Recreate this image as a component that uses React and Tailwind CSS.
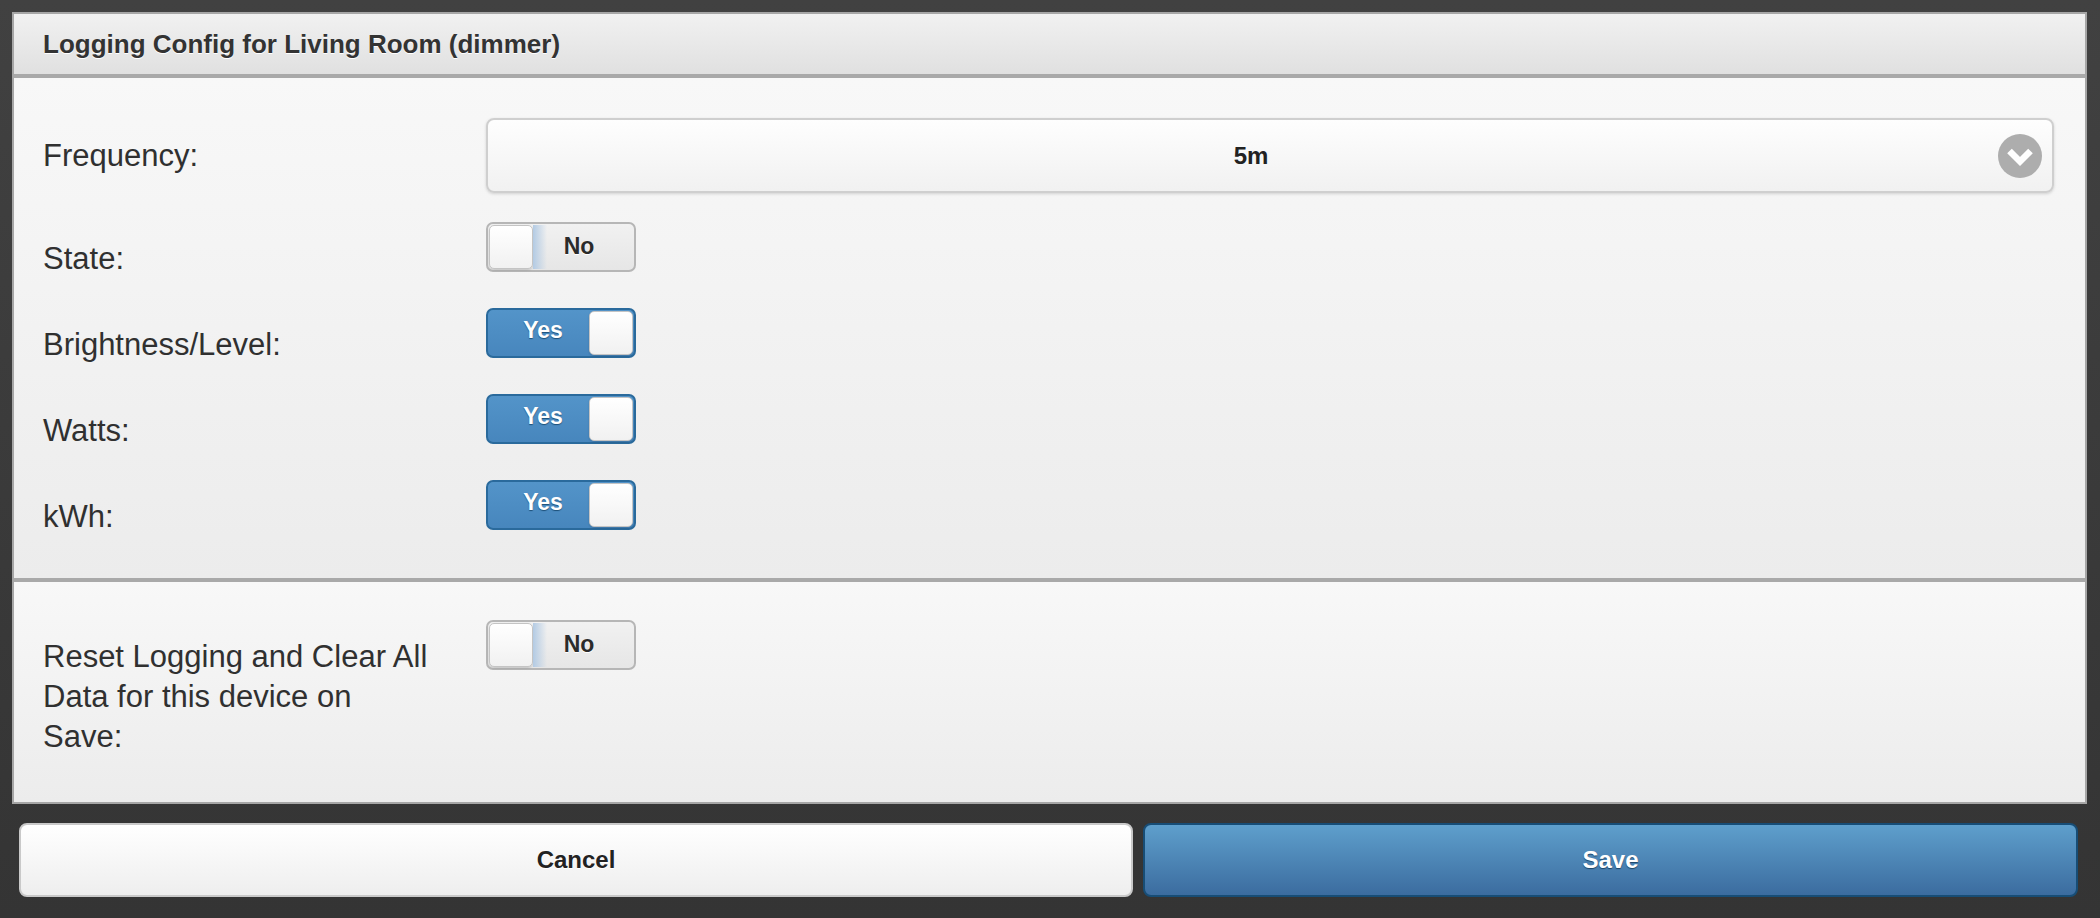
import React from "react";

function Toggle({ on }) {
  const handle = (
    <div className="w-[44px] h-full shrink-0 rounded-[5px] border border-[#c4c4c4] bg-[linear-gradient(#ffffff,#f1f1f1)] shadow-[0_1px_2px_rgba(0,0,0,0.15)]" />
  );
  if (on) {
    return (
      <div className="w-[150px] h-[50px] shrink-0 rounded-[7px] border-2 border-[#2a6a9c] bg-[linear-gradient(#5394c9,#4786bd)] flex items-stretch p-[1px]">
        <div className="flex-1 flex items-center justify-center text-[23px] font-bold text-white [text-shadow:0_1px_1px_#1d4f78] leading-none pb-[5px] pl-[8px]">
          Yes
        </div>
        {handle}
      </div>
    );
  }
  return (
    <div className="w-[150px] h-[50px] shrink-0 rounded-[7px] border-2 border-[#b6b6b6] bg-[linear-gradient(#f1f1f1,#e6e6e6)] flex items-stretch p-[1px]">
      {handle}
      <div className="flex-1 flex items-center justify-center text-[23px] font-bold text-[#2b2b2b] [text-shadow:0_1px_0_#ffffff] leading-none pb-[2px] pr-[8px] bg-[linear-gradient(to_right,#b3cbe4,rgba(255,255,255,0)_14px)]">
        No
      </div>
    </div>
  );
}

function ToggleRow({ label, on }) {
  return (
    <div className="flex items-start">
      <div className="w-[443px] shrink-0 mt-[17px] text-[31px] leading-[40px] text-[#303030]">
        {label}
      </div>
      <Toggle on={on} />
    </div>
  );
}

export default function App() {
  return (
    <div className="min-h-[918px] w-full bg-[linear-gradient(#414141,#343434)] font-['Liberation_Sans',Arial,sans-serif] pt-[12px] pb-[21px]">
      <div className="ml-[12px] mr-[13px] border-2 border-[#a6a6a6]">
        <div className="h-[64px] border-b-4 border-[#a9a9a9] bg-[linear-gradient(#f1f1f1,#e0e0e0)] flex items-center pl-[29px]">
          <span className="text-[26px] font-bold text-[#333333] [text-shadow:0_1px_0_#ffffff]">
            Logging Config for Living Room (dimmer)
          </span>
        </div>

        <div className="bg-[linear-gradient(#f8f8f8,#ececec)] pl-[29px] pr-[31px] pt-[40px] pb-[41px] flex flex-col gap-[29px]">
          <div className="flex items-center">
            <div className="w-[443px] shrink-0 text-[31px] leading-[40px] text-[#303030]">
              Frequency:
            </div>
            <div className="flex-1 h-[75px] rounded-[8px] border-2 border-[#cfcfcf] bg-[linear-gradient(#fefefe,#f1f1f1)] shadow-[0_1px_3px_rgba(0,0,0,0.15)] flex items-center pl-[16px] pr-[10px]">
              <div className="flex-1 text-center text-[24px] font-bold text-[#222222]">5m</div>
              <svg width="44" height="44" viewBox="0 0 44 44" className="shrink-0">
                <circle cx="22" cy="22" r="22" fill="#adadad" />
                <polyline
                  points="11.5,17 22,27.5 32.5,17"
                  fill="none"
                  stroke="#ffffff"
                  strokeWidth="6.5"
                  strokeLinejoin="miter"
                />
              </svg>
            </div>
          </div>
          <ToggleRow label="State:" on={false} />
          <ToggleRow label="Brightness/Level:" on={true} />
          <ToggleRow label="Watts:" on={true} />
          <ToggleRow label="kWh:" on={true} />
        </div>

        <div className="border-t-4 border-[#a9a9a9] bg-[linear-gradient(#f8f8f8,#ececec)] pl-[29px] pr-[31px] pt-[38px] pb-[45px]">
          <div className="flex items-start">
            <div className="w-[443px] shrink-0 mt-[17px] text-[31px] leading-[40px] text-[#303030]">
              Reset Logging and Clear All
              <br />
              Data for this device on
              <br />
              Save:
            </div>
            <Toggle on={false} />
          </div>
        </div>
      </div>

      <div className="mt-[19px] ml-[19px] mr-[22px] grid grid-cols-[1114fr_935fr] gap-[10px]">
        <button className="h-[74px] rounded-[8px] border-2 border-[#c9c9c9] bg-[linear-gradient(#ffffff,#eeeeee)] text-[24px] font-bold text-[#222222] [text-shadow:0_1px_0_#ffffff]">
          Cancel
        </button>
        <button className="h-[74px] rounded-[8px] border-2 border-[#174d76] bg-[linear-gradient(#5e9fcc,#3b6c9f)] text-[24px] font-bold text-white [text-shadow:0_1px_1px_#1c4466]">
          Save
        </button>
      </div>
    </div>
  );
}
